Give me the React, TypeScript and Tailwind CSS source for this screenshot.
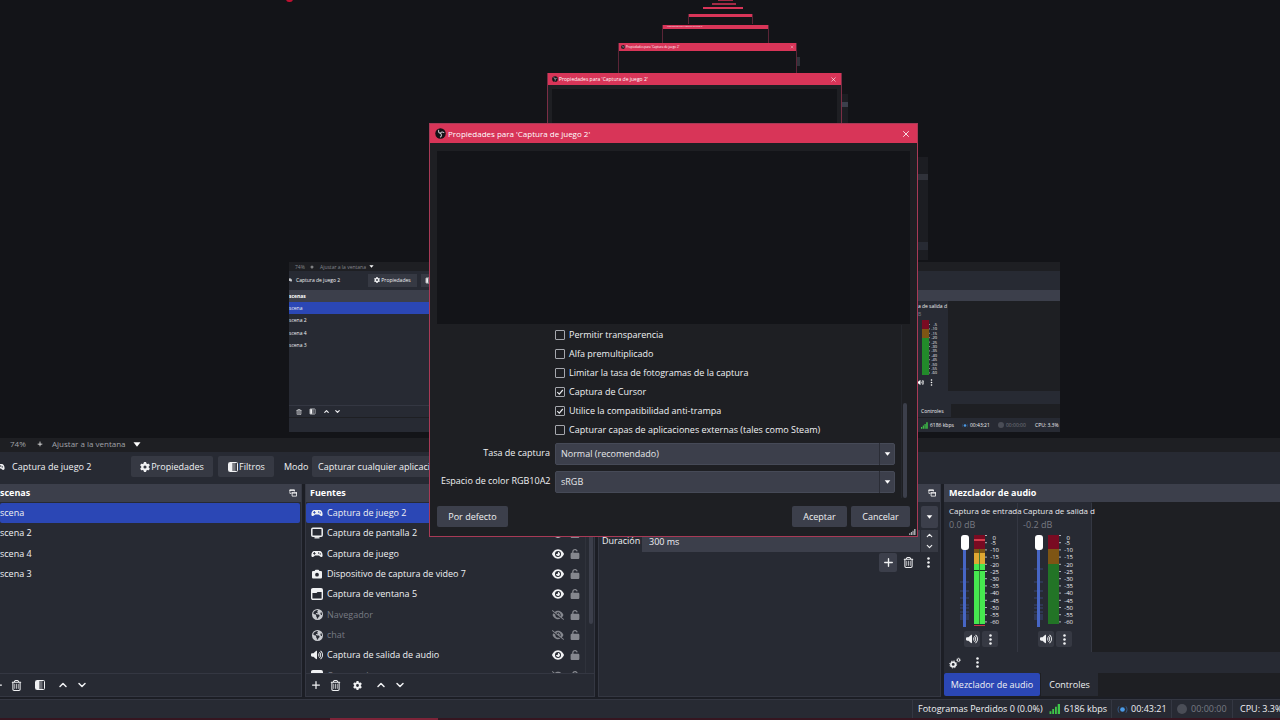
import React from 'react';
import {
    FaCamera,
    FaEarthAmericas,
    FaEye,
    FaEyeSlash,
    FaGear,
    FaPlus,
    FaRegTrashCan,
    FaUnlock,
    FaVolumeHigh,
} from 'react-icons/fa6';
import { ChevronDown, ChevronUp, X } from 'lucide-react';

const scenes = ['scena', 'scena 2', 'scena 4', 'scena 3'];

const sources = [
    { name: 'Captura de juego 2', icon: 'game', visible: true },
    { name: 'Captura de pantalla 2', icon: 'monitor', visible: true },
    { name: 'Captura de juego', icon: 'game', visible: true },
    { name: 'Dispositivo de captura de video 7', icon: 'camera', visible: true },
    { name: 'Captura de ventana 5', icon: 'window', visible: true },
    { name: 'Navegador', icon: 'globe', visible: false },
    { name: 'chat', icon: 'globe', visible: false },
    { name: 'Captura de salida de audio', icon: 'speaker', visible: true },
    { name: 'Captura de ventana', icon: 'window', visible: false },
];

const options = [
    { id: 'transparency', label: 'Permitir transparencia', checked: false },
    { id: 'alpha', label: 'Alfa premultiplicado', checked: false },
    { id: 'limit', label: 'Limitar la tasa de fotogramas de la captura', checked: false },
    { id: 'cursor', label: 'Captura de Cursor', checked: true },
    { id: 'anticheat', label: 'Utilice la compatibilidad anti-trampa', checked: true },
    { id: 'overlays', label: 'Capturar capas de aplicaciones externas (tales como Steam)', checked: false },
];

const levels = [0, -5, -10, -15, -20, -25, -30, -35, -40, -45, -50, -55, -60];

function GameIcon({ className }: { className: string }) {
    return (
        <svg viewBox="0 0 12 12" className={className}>
            <path
                fill="currentColor"
                fillRule="evenodd"
                d="M3.200 3h5.600c1.600 0 2.700 1.700 2.800 4.200.1 2-1.700 2.400-2.800 1.100L8 7.500H4l-.8.8C2.100 9.600.3 9.200.4 7.200.5 4.700 1.600 3 3.200 3zM2.900 4v.9H2v.9h.9v.9h.9v-.9h.9v-.9h-.9V4zM7.700 4.300a.7.700 0 100 1.400.7.700 0 000-1.400zM9.300 5.200a.7.700 0 100 1.400.7.700 0 000-1.400z"
            />
        </svg>
    );
}

function MonitorIcon() {
    return (
        <svg viewBox="0 0 12 12" className="w-3 h-3" fill="none" stroke="currentColor">
            <rect x="0.8" y="1.300" width="10.400" height="8" rx="1" strokeWidth="1.500" />
            <path d="M3.500 10.800h5" strokeWidth="1.300" />
        </svg>
    );
}

function WindowIcon() {
    return (
        <svg viewBox="0 0 12 12" className="w-3 h-3">
            <rect x="0.7" y="0.7" width="10.6" height="10.6" rx="1.2" fill="none" stroke="currentColor" strokeWidth="1.4" />
            <path d="M1 1h10v3H6.500L5.500 5H1z" fill="currentColor" />
        </svg>
    );
}

function FilterIcon({ className }: { className: string }) {
    return (
        <svg viewBox="0 0 12 12" className={className}>
            <rect x="1.500" y="1.500" width="9" height="9" rx="1" fill="none" stroke="currentColor" strokeWidth="1" />
            <path d="M2 2h3.500v8H2z" fill="currentColor" />
            <path d="M6 2h2.500v8H6z" fill="currentColor" opacity="0.35" />
        </svg>
    );
}

function GearsIcon() {
    return (
        <svg viewBox="0 0 12 12" className="w-3 h-3" fill="none" stroke="currentColor">
            <circle cx="4.200" cy="7.400" r="2.300" strokeWidth="1.700" />
            <circle cx="4.200" cy="7.400" r="3.500" strokeWidth="1" strokeDasharray="1.300 1.450" />
            <circle cx="9.500" cy="3" r="1.300" strokeWidth="1" />
            <circle cx="9.500" cy="3" r="2" strokeWidth="0.600" strokeDasharray="0.800 0.770" />
        </svg>
    );
}

function FloatIcon() {
    return (
        <svg viewBox="0 0 9 9" className="w-2 h-2" fill="none" stroke="currentColor">
            <path d="M2.500 5H1V1h5v2" strokeWidth="0.800" />
            <path d="M0.500 1.400h6M3 4.400h6" strokeWidth="1.300" />
            <path d="M3.500 4v4h5V4" strokeWidth="0.900" />
        </svg>
    );
}

function DotsIcon({ className }: { className: string }) {
    return (
        <svg viewBox="0 0 12 12" className={className} fill="currentColor">
            <circle cx="6" cy="1.700" r="1.400" />
            <circle cx="6" cy="6" r="1.400" />
            <circle cx="6" cy="10.300" r="1.400" />
        </svg>
    );
}

function Caret({ className }: { className: string }) {
    return (
        <svg viewBox="0 0 8 5" className={className} fill="currentColor">
            <path d="M0.500 0.300h7L4 4.700z" />
        </svg>
    );
}

function ObsIcon({ className }: { className: string }) {
    return (
        <svg viewBox="0 0 12 12" className={className}>
            <circle cx="6" cy="6" r="5.700" fill="#111216" />
            <g fill="none" stroke="#c9c9cf" strokeWidth="1.100" strokeLinecap="round">
                <path d="M4 2.500c-.5 1.900.4 3 2 3.300" />
                <path d="M9.700 5c-1.600-1-2.900-.8-3.700.8" />
                <path d="M5.900 9.800c1.600-1.100 1.400-2.700.1-4" />
            </g>
        </svg>
    );
}

function SignalIcon({ className }: { className: string }) {
    return (
        <svg viewBox="0 0 12 11" className={className} fill="currentColor">
            <path d="M0 8h2v3H0zM3 5.500h2V11H3zM6 3h2v8H6zM9 0h2.500v11H9z" />
        </svg>
    );
}

function LiveIcon({ className }: { className: string }) {
    return (
        <svg viewBox="0 0 12 10" className={className} fill="none" stroke="#3c74b4">
            <circle cx="6" cy="5" r="2.600" fill="#4a9be8" stroke="none" />
            <path d="M2.200 1.500c-1.600 2-1.600 5 0 7M9.800 1.500c1.600 2 1.600 5 0 7" opacity="0.700" />
        </svg>
    );
}

function SourceIcon({ icon }: { icon: string }) {
    if (icon === 'game') return <GameIcon className="w-3 h-3" />;
    if (icon === 'monitor') return <MonitorIcon />;
    if (icon === 'camera') return <FaCamera className="w-[10px] h-[10px]" />;
    if (icon === 'window') return <WindowIcon />;
    if (icon === 'globe') return <FaEarthAmericas className="w-[11px] h-[11px] text-[#c9cbd0]" />;
    return <FaVolumeHigh className="w-3 h-3" />;
}

function IconButton({ label, className, children }: { label: string; className?: string; children: React.ReactNode }) {
    return (
        <button type="button" aria-label={label} className={`flex items-center justify-center shrink-0 ${className ?? ''}`}>
            {children}
        </button>
    );
}

function DockHeader({ title, float }: { title: string; float?: boolean }) {
    return (
        <div className="flex items-center justify-between h-[18px] shrink-0 bg-[#3c3f4b] pr-1 font-bold text-white">
            <h2>{title}</h2>
            {float && (
                <IconButton label={`Desacoplar ${title}`}>
                    <FloatIcon />
                </IconButton>
            )}
        </div>
    );
}

function Meter({ live }: { live: boolean }) {
    return (
        <svg viewBox="0 0 30 92" className="w-[30px] h-[92px]">
            <rect x="0" y="0" width="11" height="14" fill="#790b22" />
            <rect x="0" y="14" width="11" height="15" fill="#7e5514" />
            <rect x="0" y="29" width="11" height="60" fill="#227426" />
            {live && (
                <>
                    <rect x="0" y="4" width="11" height="2" fill="#d33d4c" />
                    <rect x="0" y="18" width="11" height="11" fill="#dfa832" />
                    <rect x="0" y="29" width="11" height="60" fill="#46e84f" />
                    <path d="M0 35.500h11" stroke="#14391a" />
                    <path d="M5.500 14v75" stroke="#2c6a2d" strokeWidth="0.800" />
                    <rect x="0" y="90" width="11" height="1" fill="#c83747" />
                </>
            )}
            {levels.map((level, i) => (
                <g key={level}>
                    <path d={`M11 ${0.5 + i * 7.2}h2`} stroke="#d5d6da" strokeWidth="0.800" />
                    <text x={i < 2 ? 22 : 25} y={i === 0 ? 5 : 2.700 + i * 7.200} fontSize="6" textAnchor="end" fill="#f0f1f3">
                        {level}
                    </text>
                </g>
            ))}
        </svg>
    );
}

function MixerChannel({ name, volume, live }: { name: string; volume: string; live: boolean }) {
    return (
        <div className="w-[74px] shrink-0 border-r border-[#343742] pl-[5px] pt-px">
            <p className="text-[8px] leading-[13px] whitespace-nowrap text-[#e6e7ea]">{name}</p>
            <p className="text-[9px] leading-[15px] text-[#777a83]">{volume}</p>
            <div className="flex pl-[11px] pt-[3px]">
                <div className="relative">
                    <svg viewBox="0 0 9 92" className="absolute w-[9px] h-[92px]" stroke="#3d4d85" strokeWidth="0.800">
                        <path d="M0 34h9M0 47h9M0 56h9M0 63h9M0 70h9M0 73h9M0 77h9M0 80h9M0 82h9M0 84h9" />
                    </svg>
                    <input
                        type="range"
                        aria-label={`Volumen de ${name}`}
                        defaultValue={100}
                        className="relative block appearance-none w-[9px] h-[92px] [writing-mode:vertical-lr] [direction:rtl] bg-[linear-gradient(to_right,transparent_3px,#4766c4_3px,#4766c4_6px,transparent_6px)] [&::-webkit-slider-thumb]:appearance-none [&::-webkit-slider-thumb]:w-[8px] [&::-webkit-slider-thumb]:h-[15px] [&::-webkit-slider-thumb]:rounded-[3px] [&::-webkit-slider-thumb]:bg-white"
                    />
                </div>
                <div className="pl-[5px]">
                    <Meter live={live} />
                </div>
            </div>
            <div className="flex gap-[2px] pl-[15px] pt-1">
                <IconButton label={`Silenciar ${name}`} className="w-4 h-4 rounded-[2px] bg-[#363943]">
                    <FaVolumeHigh className="w-3 h-3" />
                </IconButton>
                <IconButton label={`Opciones de ${name}`} className="w-4 h-4 rounded-[2px] bg-[#363943]">
                    <DotsIcon className="w-[11px] h-[11px]" />
                </IconButton>
            </div>
        </div>
    );
}

function CapturedDesktop() {
    return (
        <div className="absolute left-[289px] top-[262px] w-[771px] h-[170px] flex flex-col overflow-hidden bg-[#1e1f23] text-[5px] leading-[8px] text-[#f0f1f3] whitespace-nowrap">
            <div className="flex items-center h-[9px] shrink-0 pl-[6px] text-[#85878e]">
                <span className="w-[15px]">74%</span>
                <FaPlus className="w-1 h-1 mr-[6px] text-white" />
                <span className="w-[49px]">Ajustar a la ventana</span>
                <Caret className="w-[5px] h-[3px] text-white" />
            </div>
            <div className="flex items-center h-[19px] shrink-0 pb-px bg-[#272a33]">
                <GameIcon className="w-[6px] h-[6px] -ml-[3px] mr-1" />
                <span className="w-[72px]">Captura de juego 2</span>
                <span className="flex items-center justify-center w-[49px] h-[13px] bg-[#363943]">
                    <FaGear className="w-[6px] h-[6px] mr-px" />
                    Propiedades
                </span>
                <span className="flex items-center w-[30px] h-[13px] ml-1 pl-1 bg-[#363943]">
                    <FilterIcon className="w-[7px] h-[7px]" />
                </span>
            </div>
            <div className="flex h-[127px] shrink-0">
                <div className="flex flex-col grow bg-[#272a33]">
                    <p className="h-3 leading-3 bg-[#3c3f4b] font-bold text-white">scenas</p>
                    <ul className="flex flex-col h-[49px]">
                        {scenes.map((scene, i) => (
                            <li key={scene} className={i === 0 ? 'flex items-center grow bg-[#2b47b5]' : 'flex items-center grow'}>
                                {scene}
                            </li>
                        ))}
                    </ul>
                    <div className="flex items-center gap-[7px] h-3 mt-auto pl-[7px] border-t border-[#343742]">
                        <FaRegTrashCan className="w-[6px] h-[6px]" />
                        <FilterIcon className="w-[7px] h-[7px]" />
                        <ChevronUp className="w-[7px] h-[7px]" strokeWidth={4} />
                        <ChevronDown className="-ml-[3px] w-[7px] h-[7px]" strokeWidth={4} />
                    </div>
                </div>
                <div className="flex flex-col w-[160px] shrink-0 bg-[#272a33]">
                    <div className="h-[11px] shrink-0 bg-[#3c3f4b]"></div>
                    <div className="flex h-[90px] shrink-0">
                        <div className="w-12 pl-[2px] pt-px shrink-0">
                            <p>Captura de salida d</p>
                            <p className="pl-[13px] text-[#777a83]">dB</p>
                            <svg viewBox="0 0 24 55" className="ml-[20px] mt-[2px] w-6 h-[55px]">
                                <rect width="7" height="9" fill="#790b22" />
                                <rect y="9" width="7" height="9" fill="#7e5514" />
                                <rect y="18" width="7" height="37" fill="#228a2a" />
                                {levels.slice(1).map((level, i) => (
                                    <g key={level}>
                                        <path d={`M7 ${4.500 + i * 4.400}h1`} stroke="#d5d6da" strokeWidth="0.600" />
                                        <text x="15" y={6 + i * 4.400} fontSize="4" textAnchor="end" fill="#f0f1f3">{level}</text>
                                    </g>
                                ))}
                            </svg>
                            <div className="flex items-center gap-1 pl-[15px] pt-1 text-white">
                                <FaVolumeHigh className="w-[7px] h-[7px]" />
                                <DotsIcon className="w-[7px] h-[7px]" />
                            </div>
                        </div>
                        <div className="grow bg-[#1e1f23]"></div>
                    </div>
                    <div className="h-[13px] shrink-0"></div>
                    <div className="flex grow bg-[#1e1f23]">
                        <span className="w-[51px] pl-[21px] leading-[14px] bg-[#272a33]">Controles</span>
                    </div>
                </div>
            </div>
            <div className="flex items-center justify-end grow bg-[#272a33] border-t border-[#1e1f23]">
                <SignalIcon className="w-[7px] h-[7px] mr-[2px] text-[#3fc749]" />
                <span className="w-[32px]">6186 kbps</span>
                <LiveIcon className="w-[6px] h-[5px] mr-[2px]" />
                <span className="w-[28px]">00:43:21</span>
                <span className="w-[6px] h-[6px] mr-[2px] rounded-full bg-[#4a4d56]"></span>
                <span className="w-[29px] text-[#777a83]">00:00:00</span>
                <span className="w-[25px]">CPU: 3.3%</span>
            </div>
        </div>
    );
}

// The captured desktop repeats itself inside the preview, smaller every time
function Preview() {
    return (
        <div className="relative grow overflow-hidden bg-[#131418]">
            <div className="absolute left-[286px] -top-1 w-[7px] h-[6px] rounded-full bg-[#c01030]"></div>
            <CapturedDesktop />
            <div className="absolute left-[910px] top-[157px] w-[18px] h-[103px] flex flex-col justify-between bg-[#1c1d22]">
                <div className="h-[6px] mt-[17px] bg-[#30323a]"></div>
                <div className="h-2 mb-[10px] bg-[#272a33]"></div>
            </div>
            <div className="absolute left-[842px] top-[94px] w-[6px] h-[40px] pt-[8px] bg-[#1c1d22]">
                <div className="h-[5px] bg-[#3c3f4b]"></div>
            </div>
            <div className="absolute left-[796px] top-[57px] w-1 h-[9px] bg-[#30323a]"></div>
            <div className="absolute left-[718px] top-0 w-[15px] h-px bg-[#a32a45]"></div>
            <div className="absolute left-[712px] top-[3px] w-[24px] h-[2px] bg-[#a32a45]"></div>
            <div className="absolute left-[703px] top-[7px] w-[40px] h-[2px] bg-[#d83558]"></div>
            <div className="absolute left-[688px] top-[14px] w-[65px] h-[10px] border-x border-[#5b2537]">
                <div className="h-[3px] bg-[#d83558]"></div>
            </div>
            <div className="absolute left-[662px] top-[25px] w-[107px] h-[18px] border-x border-[#5b2537]">
                <div className="h-1 px-1 bg-[#d83558] text-[2px] leading-[4px] text-[#f8e3e7]">Propiedades para 'Captura de juego 2'</div>
            </div>
            <div className="absolute left-[618px] top-[43px] w-[179px] h-[30px] border-x border-[#5b2537]">
                <div className="flex items-center h-2 px-[2px] bg-[#d83558] text-[3px] leading-[4px] text-white">
                    <ObsIcon className="w-1 h-1 mr-px" />
                    <span className="grow">Propiedades para 'Captura de juego 2'</span>
                    <X className="w-1 h-1" />
                </div>
            </div>
            <div className="absolute left-[547px] top-[73px] w-[295px] h-[60px] border-x border-[#7a2e45] bg-[#1e1f23]">
                <div className="flex items-center h-3 px-1 bg-[#d83558] text-[5px] leading-[8px] text-white">
                    <ObsIcon className="w-[6px] h-[6px] mr-px" />
                    <span className="grow">Propiedades para 'Captura de juego 2'</span>
                    <X className="w-[7px] h-[7px]" />
                </div>
                <div className="h-full mx-1 mt-1 bg-[#131418]"></div>
            </div>
        </div>
    );
}

function PropertySelect({ id, label, value }: { id: string; label: string; value: string }) {
    return (
        <div className="flex h-[22px]">
            <label htmlFor={id} className="w-[114px] pr-[5px] text-right leading-[19px] whitespace-nowrap">{label}</label>
            <div className="relative grow">
                <select id={id} className="block appearance-none w-full h-full pl-[5px] rounded-[2px] bg-[#3c3f4b] border border-[#464a57] text-[#e6e7ea]">
                    <option>{value}</option>
                </select>
                <div className="absolute right-0 top-0 h-full w-4 flex items-center justify-center border-l border-[#2b2d36] pointer-events-none">
                    <Caret className="w-[7px] h-1 text-white" />
                </div>
            </div>
        </div>
    );
}

function PropertiesDialog() {
    return (
        <div role="dialog" aria-label="Propiedades para 'Captura de juego 2'" className="absolute left-[429px] top-[123px] w-[489px] h-[414px] flex flex-col border border-[#a83a56] bg-[#1e1f23]">
            <div className="flex items-center h-[19px] shrink-0 pl-[5px] pr-[6px] bg-[#d83558] text-[8px] text-white">
                <ObsIcon className="w-[11px] h-[11px] mr-[2px]" />
                <h1 className="grow">Propiedades para 'Captura de juego 2'</h1>
                <IconButton label="Cerrar">
                    <X className="w-[10px] h-[10px]" />
                </IconButton>
            </div>
            <div className="h-[173px] shrink-0 mt-2 mx-[7px] bg-[#131418]"></div>
            <div className="flex grow pr-[10px] pl-[11px] pt-px">
                <div className="grow">
                    {options.map((option) => (
                        <div key={option.id} className="flex items-center h-[19px] pl-[114px]">
                            <div className="relative w-[10px] h-[10px]">
                                <input id={option.id} type="checkbox" defaultChecked={option.checked} className="peer block appearance-none w-[10px] h-[10px] rounded-[1px] border border-[#a5a7ad]" />
                                <svg viewBox="0 0 10 10" className="absolute inset-0 hidden peer-checked:block pointer-events-none" fill="none" stroke="#e6e7ea" strokeWidth="1.200">
                                    <path d="M2.300 5.200l2 2 3.500-4.200" />
                                </svg>
                            </div>
                            <label htmlFor={option.id} className="pl-1">{option.label}</label>
                        </div>
                    ))}
                    <div className="flex flex-col gap-[6px] pt-1">
                        <PropertySelect id="rate" label="Tasa de captura" value="Normal (recomendado)" />
                        <PropertySelect id="colorspace" label="Espacio de color RGB10A2" value="sRGB" />
                    </div>
                </div>
                <div className="flex items-end w-[6px] ml-[6px] pl-px mb-[8px] border-l border-[#25272d]">
                    <div className="w-1 h-[95px] rounded-full bg-[#3c3f4b]"></div>
                </div>
            </div>
            <div className="flex gap-1 shrink-0 px-[7px] pb-[9px]">
                <button type="button" className="w-[71px] h-[21px] mr-auto rounded-[2px] bg-[#3c3f4b]">Por defecto</button>
                <button type="button" className="w-[55px] h-[21px] rounded-[2px] bg-[#3c3f4b]">Aceptar</button>
                <button type="button" className="w-[59px] h-[21px] rounded-[2px] bg-[#3c3f4b]">Cancelar</button>
            </div>
            <SignalIcon className="absolute right-px bottom-px w-[7px] h-[6px] text-[#b9bbc0]" />
        </div>
    );
}

function ListControls({ last, children }: { last: string; children: React.ReactNode }) {
    return (
        <div className="flex items-center h-[23px] shrink-0 border-t border-[#343742]">
            {children}
            <IconButton label={`Subir ${last}`} className="w-[19px]">
                <ChevronUp className="w-3 h-3" strokeWidth={3} />
            </IconButton>
            <IconButton label={`Bajar ${last}`} className="w-[19px]">
                <ChevronDown className="w-3 h-3" strokeWidth={3} />
            </IconButton>
        </div>
    );
}

export default function App() {
    return (
        <div className="relative flex flex-col h-screen min-h-[720px] overflow-hidden bg-[#1c1e25] font-['Open_Sans',sans-serif] text-[9px] leading-[14px] text-[#f0f1f3]">
            <Preview />

            <div className="flex items-center h-[14px] shrink-0 pb-[2px] bg-[#1e1f23] text-[8px] text-[#a0a2a8] whitespace-nowrap">
                <span className="w-[36px] pl-[10px]">74%</span>
                <IconButton label="Acercar" className="w-2 text-white">
                    <FaPlus className="w-[6px] h-[6px]" />
                </IconButton>
                <span className="w-[89px] pl-2">Ajustar a la ventana</span>
                <IconButton label="Escala de la vista previa" className="text-white">
                    <Caret className="w-2 h-[5px]" />
                </IconButton>
            </div>

            <div className="flex items-center h-[32px] shrink-0 pb-[3px] bg-[#272a33] whitespace-nowrap">
                <GameIcon className="w-3 h-3 -ml-[7px] mr-[7px] shrink-0" />
                <span className="w-[119px]">Captura de juego 2</span>
                <button type="button" className="flex items-center justify-center w-[82px] h-[21px] rounded-[2px] bg-[#363943]">
                    <FaGear className="w-[10px] h-[10px] mr-px" />
                    Propiedades
                </button>
                <button type="button" className="flex items-center justify-center w-[56px] h-[21px] ml-[5px] rounded-[2px] bg-[#363943]">
                    <FilterIcon className="w-3 h-3" />
                    Filtros
                </button>
                <label htmlFor="mode" className="w-[38px] pl-[10px]">Modo</label>
                <select id="mode" className="appearance-none w-[260px] h-[21px] pl-[6px] rounded-[2px] bg-[#363943]">
                    <option>Capturar cualquier aplicación a pantalla completa</option>
                </select>
            </div>

            <div className="grid grid-cols-[302fr_290fr_343fr_336fr] gap-[3px] h-[213px] shrink-0">
                <section className="flex flex-col min-w-0 bg-[#272a33] border-r border-b border-[#343742]">
                    <DockHeader title="scenas" float />
                    <ul className="flex flex-col h-[82px] mr-px pt-px">
                        {scenes.map((scene, i) => (
                            <li key={scene} className={i === 0 ? 'flex items-center grow bg-[#2b47b5] rounded-[2px]' : 'flex items-center grow'}>
                                {scene}
                            </li>
                        ))}
                    </ul>
                    <div className="mt-auto">
                        <ListControls last="escena">
                            <IconButton label="Agregar escena" className="w-[10px] -ml-[7px]">
                                <FaPlus className="w-[10px] h-[10px]" />
                            </IconButton>
                            <IconButton label="Eliminar escena" className="w-[27px]">
                                <FaRegTrashCan className="w-[11px] h-[11px]" />
                            </IconButton>
                            <IconButton label="Filtros de escena" className="w-[20px]">
                                <FilterIcon className="w-3 h-3" />
                            </IconButton>
                            <span className="w-[3px]"></span>
                        </ListControls>
                    </div>
                </section>

                <section className="flex flex-col min-w-0 bg-[#272a33] border-x border-b border-[#343742]">
                    <div className="pl-1 bg-[#3c3f4b]">
                        <DockHeader title="Fuentes" float />
                    </div>
                    <div className="flex h-[171px] overflow-hidden">
                        <ul className="flex flex-col grow h-[184px] pt-px">
                            {sources.map((source, i) => (
                                <li key={source.name} className={`flex items-center grow pl-[5px] rounded-[2px] ${i === 0 ? 'bg-[#2b47b5]' : ''}`}>
                                    <span className="flex justify-center w-3 mr-1">
                                        <SourceIcon icon={source.icon} />
                                    </span>
                                    <span className={`grow whitespace-nowrap ${source.visible ? '' : 'text-[#777a83]'}`}>{source.name}</span>
                                    <IconButton label={`Mostrar ${source.name}`} className="w-3 mr-[6px]">
                                        {source.visible ? <FaEye className="w-3 h-3" /> : <FaEyeSlash className="w-3 h-3 text-[#85878e]" />}
                                    </IconButton>
                                    <IconButton label={`Bloquear ${source.name}`} className="mr-[5px] text-[#85878e]">
                                        <FaUnlock className="w-[10px] h-[10px]" />
                                    </IconButton>
                                </li>
                            ))}
                        </ul>
                        <div className="w-[9px] shrink-0 pl-[3px] border-l border-[#2f323b]">
                            <div className="w-[4px] h-[122px] rounded-full bg-[#3c3f4b]"></div>
                        </div>
                    </div>
                    <ListControls last="fuente">
                        <IconButton label="Agregar fuente" className="w-[20px]">
                            <FaPlus className="w-[10px] h-[10px]" />
                        </IconButton>
                        <IconButton label="Eliminar fuente" className="w-[18px]">
                            <FaRegTrashCan className="w-[11px] h-[11px]" />
                        </IconButton>
                        <IconButton label="Propiedades de fuente" className="w-[27px]">
                            <FaGear className="w-[9px] h-[9px]" />
                        </IconButton>
                    </ListControls>
                </section>

                <section className="flex flex-col min-w-0 bg-[#272a33] border-x border-b border-[#343742]">
                    <DockHeader title="" float />
                    <div className="flex justify-end h-[23px] mt-1 pr-[2px]">
                        <IconButton label="Elegir transición" className="w-[17px] h-[22px] rounded-[2px] bg-[#3c3f4b]">
                            <Caret className="w-[7px] h-1 text-white" />
                        </IconButton>
                    </div>
                    <div className="flex items-center h-[22px] mt-px pl-[3px] pr-[2px]">
                        <label htmlFor="duration" className="w-[40px]">Duración</label>
                        <input id="duration" type="text" defaultValue="300 ms" className="grow min-w-0 h-[22px] pl-[7px] bg-[#3c3f4b]" />
                        <div className="flex flex-col justify-around w-[18px] h-[22px] border-l border-[#272a33] bg-[#363943]">
                            <IconButton label="Aumentar duración">
                                <ChevronUp className="w-[9px] h-[9px]" strokeWidth={3} />
                            </IconButton>
                            <IconButton label="Reducir duración">
                                <ChevronDown className="w-[9px] h-[9px]" strokeWidth={3} />
                            </IconButton>
                        </div>
                    </div>
                    <div className="flex items-center justify-end gap-[2px] mt-px pr-[3px]">
                        <IconButton label="Agregar transición" className="w-[18px] h-[19px] rounded-[2px] bg-[#3c3f4b]">
                            <FaPlus className="w-[11px] h-[11px]" />
                        </IconButton>
                        <IconButton label="Eliminar transición" className="w-[18px] h-[19px]">
                            <FaRegTrashCan className="w-[11px] h-[11px]" />
                        </IconButton>
                        <IconButton label="Opciones de transición" className="w-[18px] h-[19px]">
                            <DotsIcon className="w-[11px] h-[11px]" />
                        </IconButton>
                    </div>
                </section>

                <section className="flex flex-col min-w-0 bg-[#1e1f23]">
                    <div className="pl-[5px] bg-[#3c3f4b]">
                        <DockHeader title="Mezclador de audio" />
                    </div>
                    <div className="flex h-[150px] shrink-0">
                        <div className="flex shrink-0 pt-px bg-[#272a33]">
                            <MixerChannel name="Captura de entrada" volume="0.0 dB" live />
                            <MixerChannel name="Captura de salida d" volume="-0.2 dB" live={false} />
                        </div>
                    </div>
                    <div className="flex items-center gap-[11px] h-[21px] shrink-0 pl-[5px] bg-[#272a33]">
                        <IconButton label="Propiedades de audio avanzadas">
                            <GearsIcon />
                        </IconButton>
                        <IconButton label="Menú del mezclador">
                            <DotsIcon className="w-[11px] h-[11px]" />
                        </IconButton>
                    </div>
                    <div className="flex grow gap-px">
                        <button type="button" className="w-[96px] h-[23px] rounded-[2px] bg-[#2b47b5]">Mezclador de audio</button>
                        <button type="button" className="w-[57px] h-[23px] bg-[#272a33]">Controles</button>
                    </div>
                </section>
            </div>

            <footer className="flex justify-end h-[19px] shrink-0 mt-[2px] bg-[#272a33] border-t border-[#343742] whitespace-nowrap leading-[18px]">
                <span className="w-[132px] pl-[5px] border-l border-[#343742]">Fotogramas Perdidos 0 (0.0%)</span>
                <span className="flex items-center w-[67px] pl-[5px]">
                    <SignalIcon className="w-3 h-[10px] mr-[3px] text-[#3fc749]" />
                    6186 kbps
                </span>
                <span className="flex items-center w-[60px] pl-[5px] border-l border-[#343742]">
                    <LiveIcon className="w-[11px] h-[9px] mr-[3px]" />
                    00:43:21
                </span>
                <span className="flex items-center w-[61px] pl-[5px] border-l border-[#343742] text-[#777a83]">
                    <span className="w-[10px] h-[10px] mr-1 rounded-full bg-[#4a4d56]"></span>
                    00:00:00
                </span>
                <span className="w-[48px] pl-[7px] border-l border-[#343742]">CPU: 3.3%</span>
            </footer>
            <div className="h-[2px] shrink-0 bg-[#351520]">
                <div className="w-[108px] h-full ml-[330px] bg-[#7d2338]"></div>
            </div>

            <PropertiesDialog />
        </div>
    );
}
